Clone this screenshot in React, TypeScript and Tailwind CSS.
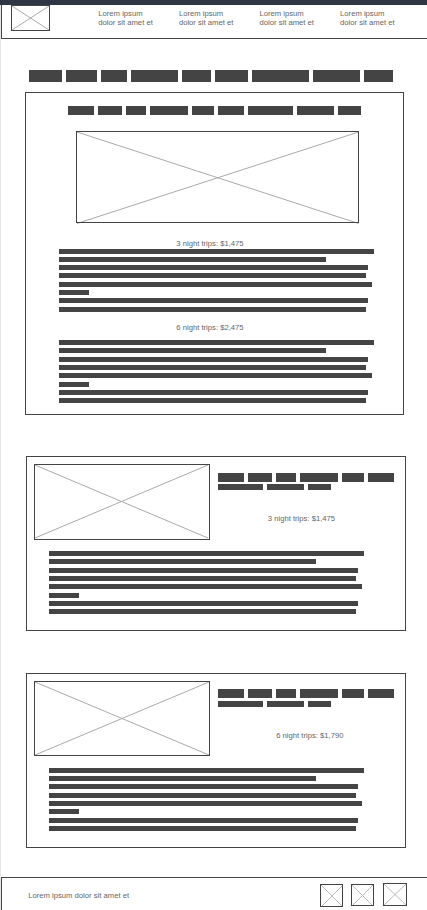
import React from "react";

const LINES = [
  "w-[315px]",
  "w-[267px]",
  "w-[309px]",
  "w-[307px]",
  "w-[313px]",
  "w-[30px]",
  "w-[309px]",
  "w-[307px]",
];

const TITLE = ["w-[33px]", "w-[31px]", "w-[26px]", "w-[47px]", "w-[29px]", "w-[33px]", "w-[57px]", "w-[47px]", "w-[29px]"];
const SUBTITLE = ["w-[26px]", "w-[24px]", "w-[20px]", "w-[38px]", "w-[22px]", "w-[26px]", "w-[45px]", "w-[37px]", "w-[23px]"];
const CARD_TITLE = ["w-[26px]", "w-[24px]", "w-[20px]", "w-[38px]", "w-[22px]", "w-[26px]"];
const CARD_SUBTITLE = ["w-[45px]", "w-[37px]", "w-[23px]"];

function Words({ widths, className }: { widths: string[]; className: string }) {
  return (
    <div className={`flex gap-1 ${className}`}>
      {widths.map((w, i) => (
        <span key={i} className={`h-full shrink-0 bg-[#444444] ${w}`} />
      ))}
    </div>
  );
}

/* Lines sit 3px apart, except for the indices in `wide`, which follow a 4px gap. */
function Paragraph({ wide, className }: { wide: number[]; className: string }) {
  return (
    <div className={`flex flex-col ${className}`}>
      {LINES.map((w, i) => (
        <span
          key={i}
          className={`h-[5px] shrink-0 bg-[#444444] ${w} ${i === 0 ? "" : wide.includes(i) ? "mt-1" : "mt-[3px]"}`}
        />
      ))}
    </div>
  );
}

function Placeholder({
  className,
  w,
  h,
  x2,
  y2,
  stroke = "#aaaaaa",
}: {
  className: string;
  w: number;
  h: number;
  x2: number;
  y2: number;
  stroke?: string;
}) {
  return (
    <svg className={`block shrink-0 overflow-visible ${className}`} viewBox={`0 0 ${w} ${h}`} fill="none">
      <path d={`M1 1L${x2} ${y2}M1 ${y2}L${x2} 1`} stroke={stroke} strokeWidth="1" />
      <rect x="0.5" y="0.5" width={w - 1} height={h - 1} stroke="#444444" />
    </svg>
  );
}

function NavItem() {
  return (
    <a className="w-[80.6px] shrink-0">
      Lorem ipsum
      <br />
      dolor sit amet et
    </a>
  );
}

export default function App() {
  return (
    <div className="flex h-[910px] w-[427px] flex-col overflow-hidden bg-white font-['Liberation_Sans',Arial,sans-serif] text-[7.67px] leading-[9px] whitespace-nowrap text-[#666666] antialiased">
      <div className="h-[5px] shrink-0 bg-[#2f3542]" />
      <div className="flex min-h-0 flex-1 flex-col border-l border-[#e6e6e6]">
        <header className="flex h-[34px] shrink-0 border-b border-l border-[#444444]">
          <Placeholder className="ml-[9px] h-[26px] w-[39px]" w={39} h={26} x2={38} y2={25} />
          <nav className="mt-1 ml-[48.3px] flex">
            <NavItem />
            <NavItem />
            <NavItem />
            <NavItem />
          </nav>
        </header>

        <Words widths={TITLE} className="mt-[31px] ml-7 h-3 shrink-0" />

        <section className="mt-[10px] ml-6 flex h-[323px] w-[379px] shrink-0 flex-col border border-[#444444]">
          <Words widths={SUBTITLE} className="mt-[13px] ml-[42px] h-[9px] shrink-0" />
          <Placeholder className="mt-4 ml-[50px] h-[92px] w-[283px]" w={283} h={92} x2={282.5} y2={92.5} />
          <p className="mt-4 ml-[150.3px] h-[9px]">3 night trips: $1,475</p>
          <Paragraph wide={[4, 7]} className="mt-px ml-[33px]" />
          <p className="mt-[11px] ml-[150.3px] h-[9px]">6 night trips: $2,475</p>
          <Paragraph wide={[2, 5]} className="mt-2 ml-[33px]" />
        </section>

        <section className="mt-[41px] ml-[25px] flex h-[175px] w-[380px] shrink-0 flex-col border border-[#444444]">
          <div className="mt-[7px] ml-[7px] flex h-[76px] gap-2">
            <Placeholder className="h-[76px] w-[176px]" w={176} h={76} x2={174} y2={74} />
            <div>
              <Words widths={CARD_TITLE} className="mt-[9px] h-[9px]" />
              <Words widths={CARD_SUBTITLE} className="mt-[2px] h-[6px]" />
              <p className="mt-6 ml-[49.8px]">3 night trips: $1,475</p>
            </div>
          </div>
          <Paragraph wide={[2, 5]} className="mt-[11px] ml-[22px]" />
        </section>

        <section className="mt-[42px] ml-[25px] flex h-[175px] w-[380px] shrink-0 flex-col border border-[#444444]">
          <div className="mt-[7px] ml-[7px] flex h-[75px] gap-2">
            <Placeholder className="h-[75px] w-[176px]" w={176} h={75} x2={175} y2={74} />
            <div>
              <Words widths={CARD_TITLE} className="mt-2 h-[9px]" />
              <Words widths={CARD_SUBTITLE} className="mt-[3px] h-[6px]" />
              <p className="mt-6 ml-[58.2px]">6 night trips: $1,790</p>
            </div>
          </div>
          <Paragraph wide={[3, 6]} className="mt-3 ml-[22px]" />
        </section>

        <footer className="mt-[29px] flex min-h-0 flex-1 border-t border-l border-[#444444]">
          <p className="mt-[13px] ml-[26.2px] w-[291.8px]">Lorem ipsum dolor sit amet et</p>
          <Placeholder className="mt-[6px] h-[23px] w-[23px]" w={23} h={23} x2={23} y2={23} stroke="#bbbbbb" />
          <Placeholder className="mt-[6px] ml-2 h-[22px] w-[23px]" w={23} h={22} x2={22} y2={22} stroke="#bbbbbb" />
          <Placeholder className="mt-[5px] ml-[9px] h-[23px] w-[24px]" w={24} h={23} x2={23} y2={22} stroke="#bbbbbb" />
        </footer>
      </div>
    </div>
  );
}
